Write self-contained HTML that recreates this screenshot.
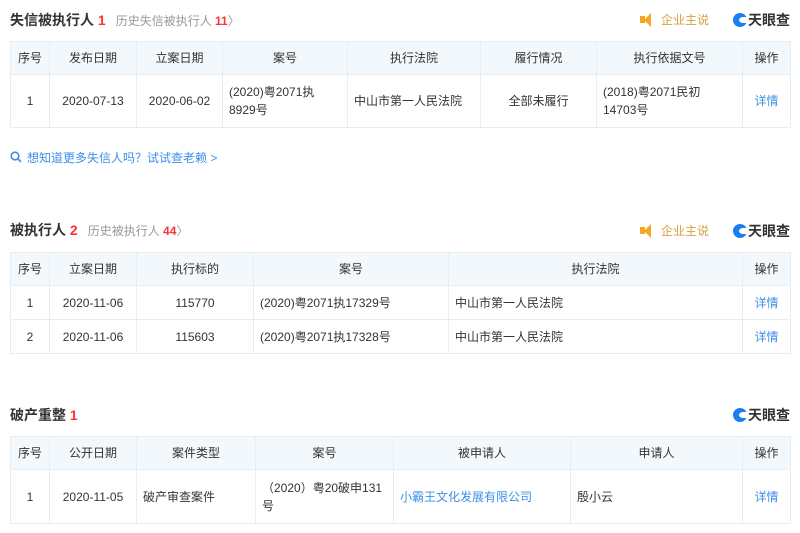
<!DOCTYPE html>
<html><head><meta charset="utf-8"><style>
*{margin:0;padding:0;box-sizing:border-box}
body{width:800px;height:533px;background:#fff;font-family:"Liberation Sans","Noto Sans CJK SC",sans-serif;color:#333;position:relative;overflow:hidden}
.t{position:absolute;left:10px;font-size:14px;font-weight:bold;color:#333}
.t .n{color:#f33;font-weight:bold}
.t .h{font-weight:normal;color:#999;font-size:12px;margin-left:10px}
.t .h b{color:#f33}
table{position:absolute;left:10px;border-collapse:collapse;table-layout:fixed;font-size:12px;color:#333}
td,th{border:1px solid #e6edf3;text-align:center;font-weight:normal;padding:0 6px;line-height:18px}
th{background:#f2f8fc;height:33px}
td.l{text-align:left}
.b{color:#3f8fe8}
.logo{position:absolute;right:10px;font-size:14px;font-weight:bold;color:#333;display:flex;align-items:center}
.logo i{display:inline-block;width:14px;height:14px;border-radius:50%;background:#1c7ef0;margin-right:1px;position:relative}
.logo i:after{content:"";position:absolute;left:6px;top:4px;width:8px;height:6px;background:#fff;border-radius:50% 0 0 50%}
.qy{position:absolute;font-size:12px;color:#d9a040;display:flex;align-items:center}
.qy s{display:inline-block;width:5px;height:7px;background:#f6a623;}
.qy u{display:inline-block;width:0;height:0;border-top:7px solid transparent;border-bottom:7px solid transparent;border-right:7px solid #f6a623;margin-right:10px;margin-left:-1px}
</style></head><body>

<div class="t" style="top:10px">失信被执行人 <span class="n">1</span><span class="h">历史失信被执行人 <b>11</b>〉</span></div>
<div class="qy" style="left:640px;top:11px"><s></s><u></u>企业主说</div>
<div class="logo" style="top:10px"><i></i>天眼查</div>
<table style="top:41px;width:780px">
<colgroup><col style="width:39px"><col style="width:87px"><col style="width:86px"><col style="width:125px"><col style="width:133px"><col style="width:116px"><col style="width:146px"><col style="width:48px"></colgroup>
<tr><th>序号</th><th>发布日期</th><th>立案日期</th><th>案号</th><th>执行法院</th><th>履行情况</th><th>执行依据文号</th><th>操作</th></tr>
<tr style="height:53px"><td>1</td><td>2020-07-13</td><td>2020-06-02</td><td class="l">(2020)粤2071执<br>8929号</td><td class="l">中山市第一人民法院</td><td>全部未履行</td><td class="l">(2018)粤2071民初<br>14703号</td><td class="b">详情</td></tr>
</table>
<div style="position:absolute;left:10px;top:149px;font-size:12px;color:#3f8fe8">
<svg width="12" height="12" viewBox="0 0 12 12" style="vertical-align:-1px;margin-right:5px"><circle cx="5" cy="5" r="3.8" fill="none" stroke="#3f8fe8" stroke-width="1.6"/><line x1="8" y1="8" x2="11" y2="11" stroke="#3f8fe8" stroke-width="1.6"/></svg>想知道更多失信人吗？试试查老赖 &gt;</div>

<div class="t" style="top:220px">被执行人 <span class="n">2</span><span class="h">历史被执行人 <b>44</b>〉</span></div>
<div class="qy" style="left:640px;top:222px"><s></s><u></u>企业主说</div>
<div class="logo" style="top:221px"><i></i>天眼查</div>
<table style="top:252px;width:780px">
<colgroup><col style="width:39px"><col style="width:87px"><col style="width:117px"><col style="width:195px"><col style="width:294px"><col style="width:48px"></colgroup>
<tr><th>序号</th><th>立案日期</th><th>执行标的</th><th>案号</th><th>执行法院</th><th>操作</th></tr>
<tr style="height:34px"><td>1</td><td>2020-11-06</td><td>115770</td><td class="l">(2020)粤2071执17329号</td><td class="l">中山市第一人民法院</td><td class="b">详情</td></tr>
<tr style="height:34px"><td>2</td><td>2020-11-06</td><td>115603</td><td class="l">(2020)粤2071执17328号</td><td class="l">中山市第一人民法院</td><td class="b">详情</td></tr>
</table>

<div class="t" style="top:405px">破产重整 <span class="n">1</span></div>
<div class="logo" style="top:405px"><i></i>天眼查</div>
<table style="top:436px;width:780px">
<colgroup><col style="width:39px"><col style="width:87px"><col style="width:119px"><col style="width:138px"><col style="width:177px"><col style="width:172px"><col style="width:48px"></colgroup>
<tr><th>序号</th><th>公开日期</th><th>案件类型</th><th>案号</th><th>被申请人</th><th>申请人</th><th>操作</th></tr>
<tr style="height:54px"><td>1</td><td>2020-11-05</td><td class="l">破产审查案件</td><td class="l">（2020）粤20破申131<br>号</td><td class="l b">小霸王文化发展有限公司</td><td class="l">殷小云</td><td class="b">详情</td></tr>
</table>
</body></html>
